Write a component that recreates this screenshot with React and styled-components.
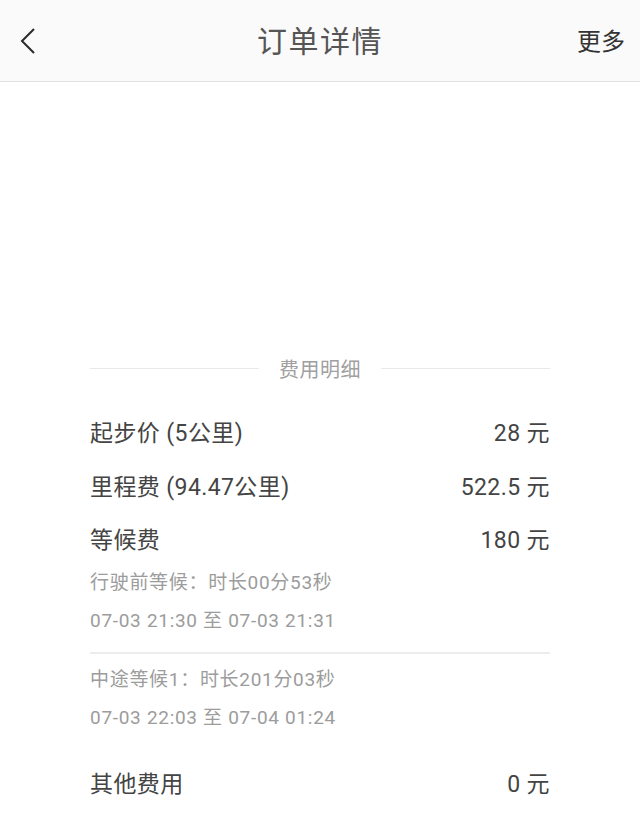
import React from "react";
import styled, { createGlobalStyle } from "styled-components";

const Global = createGlobalStyle`
  html, body { margin: 0; padding: 0; background: #ffffff; }
  body { font-family: Roboto, "Noto Sans CJK SC", "Noto Sans", sans-serif; }
  * { box-sizing: border-box; }
`;

const Page = styled.div`
  width: 640px;
  min-height: 833px;
  background: #ffffff;
  overflow: hidden;
`;

const Header = styled.header`
  height: 82px;
  background: #fafafa;
  border-bottom: 1px solid #e2e2e2;
  display: grid;
  grid-template-columns: 120px 1fr 120px;
  align-items: center;
`;

const BackButton = styled.button`
  border: 0;
  background: none;
  padding: 0 0 0 17px;
  height: 100%;
  display: flex;
  align-items: center;
  justify-content: flex-start;
  cursor: pointer;
`;

const Title = styled.h1`
  margin: 0 0 3px;
  text-align: center;
  font-size: 30px;
  font-weight: 400;
  color: #555555;
  letter-spacing: 1.5px;
`;

const More = styled.div`
  text-align: right;
  padding-right: 15px;
  margin-bottom: 3px;
  font-size: 24px;
  color: #333333;
`;

const Section = styled.section`
  margin-top: 266px;
  padding: 0 90px;
`;

const SectionTitle = styled.div`
  height: 40px;
  display: flex;
  align-items: center;
  gap: 20px;
  font-size: 20px;
  letter-spacing: 0.5px;
  color: #a0a0a0;
  margin-bottom: 16px;
  &::before, &::after {
    content: "";
    flex: 1;
    height: 1px;
    background: #e8e8e8;
  }
`;

const FeeRow = styled.div`
  height: ${(p) => p.$h || 54}px;
  display: flex;
  align-items: center;
  justify-content: space-between;
  font-size: 23px;
  letter-spacing: 0.4px;
  color: #444444;
`;

const SubLine = styled.div`
  height: 38px;
  line-height: 38px;
  font-size: 19px;
  letter-spacing: 0.7px;
  color: #9c9c9c;
`;

const Divider = styled.div`
  height: 2px;
  background: #ececec;
  margin: 12px 0 7px;
`;

const Spacer = styled.div`
  height: ${(p) => p.$h}px;
`;

function Chevron() {
  return (
    <svg width="20" height="28" viewBox="0 0 20 28">
      <path d="M17 2 L5 14 L17 26" fill="none" stroke="#2a2a2a" strokeWidth="2" />
    </svg>
  );
}

export default function App() {
  return (
    <Page>
      <Global />
      <Header>
        <BackButton aria-label="返回">
          <Chevron />
        </BackButton>
        <Title>订单详情</Title>
        <More>更多</More>
      </Header>
      <Section>
        <SectionTitle>费用明细</SectionTitle>
        <FeeRow>
          <span>起步价 (5公里)</span>
          <span>28 元</span>
        </FeeRow>
        <FeeRow>
          <span>里程费 (94.47公里)</span>
          <span>522.5 元</span>
        </FeeRow>
        <FeeRow $h={52}>
          <span>等候费</span>
          <span>180 元</span>
        </FeeRow>
        <SubLine>行驶前等候：时长00分53秒</SubLine>
        <SubLine>07-03 21:30 至 07-03 21:31</SubLine>
        <Divider />
        <SubLine>中途等候1：时长201分03秒</SubLine>
        <SubLine>07-03 22:03 至 07-04 01:24</SubLine>
        <Spacer $h={18} />
        <FeeRow>
          <span>其他费用</span>
          <span>0 元</span>
        </FeeRow>
      </Section>
    </Page>
  );
}
